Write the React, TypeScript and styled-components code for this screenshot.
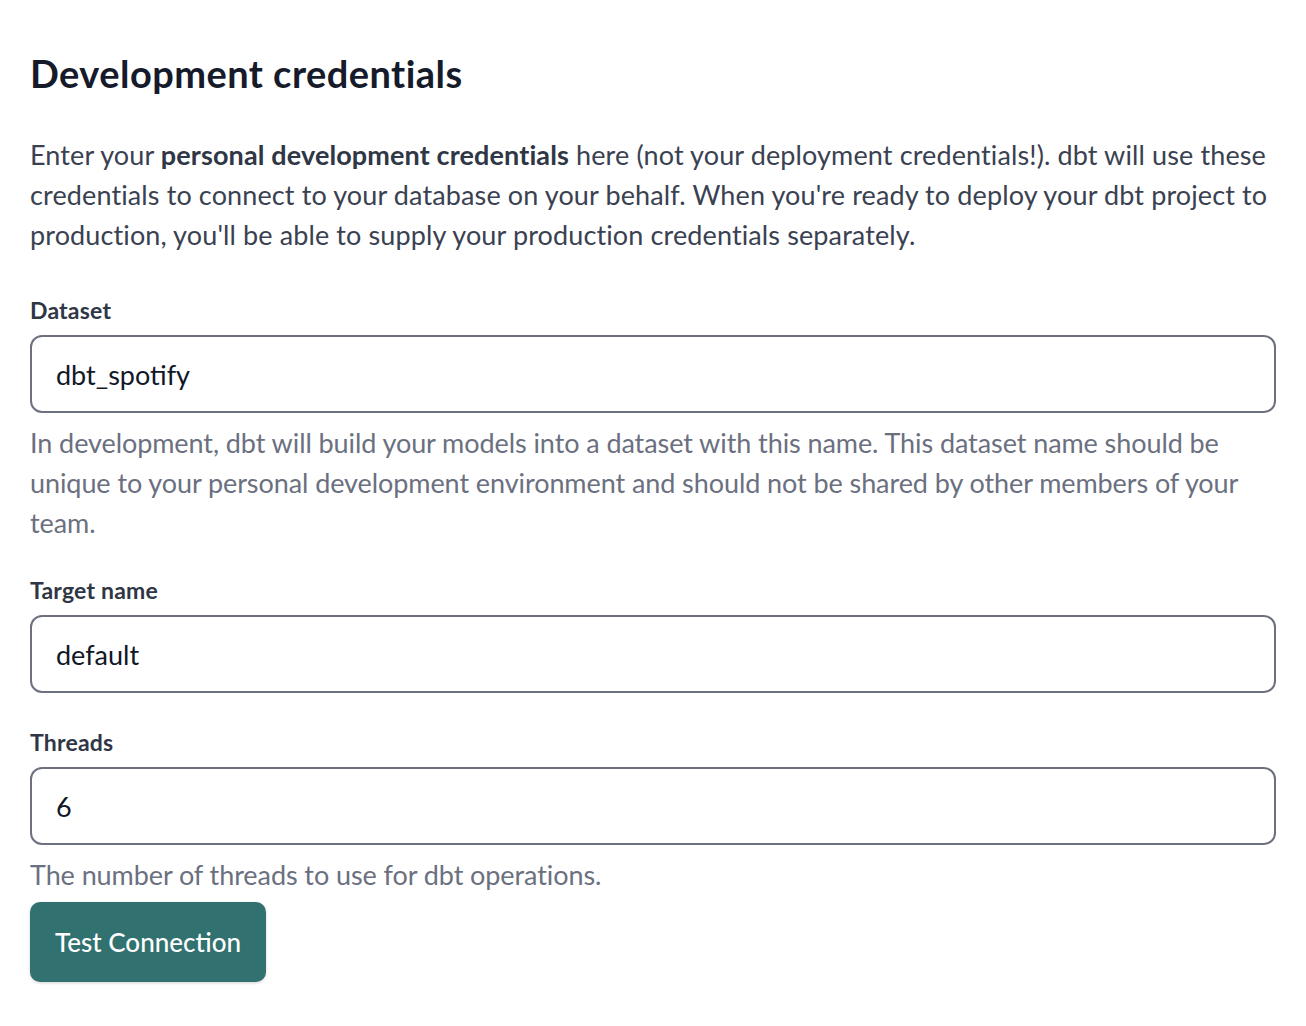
import React from "react";
import styled, { createGlobalStyle } from "styled-components";

const Global = createGlobalStyle`
  html, body { margin: 0; padding: 0; background: #ffffff; }
  body { font-family: "Lato", "Noto Sans", sans-serif; -webkit-font-smoothing: antialiased; }
  * { box-sizing: border-box; }
`;

const Page = styled.main`
  padding: 51px 30px 40px 30px;
  display: flex;
  flex-direction: column;
`;

const Title = styled.h1`
  margin: 0;
  font-size: 38px;
  letter-spacing: 0.45px;
  line-height: 44px;
  font-weight: 700;
  color: #161b2b;
`;

const Intro = styled.p`
  margin: 40px 0 0 0;
  font-size: 27px;
  letter-spacing: 0.12px;
  line-height: 40px;
  color: #3a4151;
  strong { font-weight: 700; color: #2f3645; }
`;

const Field = styled.div<{ $top: number }>`
  display: flex;
  flex-direction: column;
  margin-top: ${(p) => p.$top}px;
`;

const Label = styled.label`
  font-size: 23px;
  letter-spacing: 0.2px;
  line-height: 30px;
  font-weight: 700;
  color: #2f3645;
  margin-bottom: 10px;
`;

const Input = styled.input`
  height: 78px;
  width: 100%;
  border: 2px solid #6d717f;
  border-radius: 12px;
  padding: 0 24px;
  font-family: inherit;
  font-size: 27px;
  color: #111827;
  background: #fff;
  outline: none;
`;

const Help = styled.p`
  margin: 10px 0 0 0;
  font-size: 27px;
  letter-spacing: -0.08px;
  line-height: 40px;
  color: #6b7080;
`;

const Button = styled.button`
  align-self: flex-start;
  margin-top: 7px;
  height: 80px;
  padding: 0 25px;
  border: none;
  border-radius: 10px;
  background: #317170;
  color: #ffffff;
  font-family: inherit;
  font-size: 26px;
  font-weight: 500;
  box-shadow: 0 1px 3px rgba(0, 0, 0, 0.18);
  cursor: pointer;
`;

export default function App() {
  return (
    <>
      <Global />
      <Page>
        <Title>Development credentials</Title>
        <Intro>
          Enter your <strong>personal development credentials</strong> here (not your deployment credentials!). dbt will use these credentials to connect to your database on your behalf. When you're ready to deploy your dbt project to production, you'll be able to supply your production credentials separately.
        </Intro>
        <Field $top={40}>
          <Label>Dataset</Label>
          <Input defaultValue="dbt_spotify" />
          <Help>
            In development, dbt will build your models into a dataset with this name. This dataset name should be unique to your personal development environment and should not be shared by other members of your team.
          </Help>
        </Field>
        <Field $top={32}>
          <Label>Target name</Label>
          <Input defaultValue="default" />
        </Field>
        <Field $top={34}>
          <Label>Threads</Label>
          <Input defaultValue="6" />
          <Help>The number of threads to use for dbt operations.</Help>
        </Field>
        <Button>Test Connection</Button>
      </Page>
    </>
  );
}
